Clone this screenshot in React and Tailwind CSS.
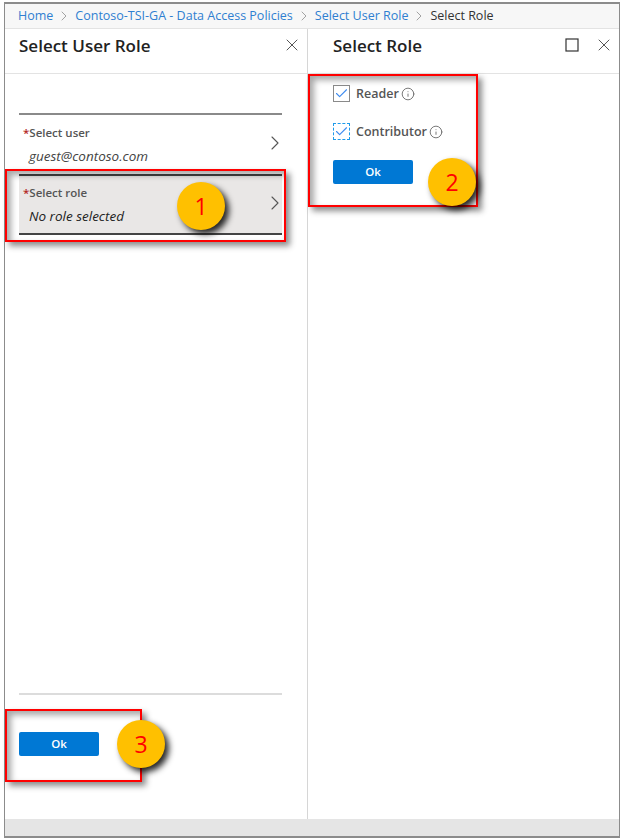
import React from 'react';
import { ChevronRight, X, Check, Info } from 'lucide-react';

const Crumb = ({ children, current }) => (
  <span className={current ? 'text-[#333333]' : 'text-[#2f7fd1]'}>{children}</span>
);

const Sep = () => <ChevronRight size={16} strokeWidth={1} className="mx-[3px] text-[#777777]" />;

const Row = ({ label, value, italicDark, active }) => (
  <div className={`flex items-center justify-between h-[59px] ${active ? 'bg-[#e9e7e6] border-b-2 border-[#444444]' : ''}`}>
    <div className="pl-[4px]">
      <div className="text-[11.5px] leading-[16px] font-semibold text-[#555555]">
        <span className="text-[#b3261e]">*</span>Select {label}
      </div>
      <div className={`pl-[6px] mt-[7px] text-[13.5px] leading-[16px] italic ${italicDark ? 'text-[#222222]' : 'text-[#444444]'}`}>{value}</div>
    </div>
    <ChevronRight size={24} strokeWidth={1.1} className="-mt-[3px] -mr-[5px] text-[#555555]" />
  </div>
);

const RoleCheck = ({ label, focused }) => (
  <div className="flex items-center h-[16px]">
    <div className={`w-[17px] h-[17px] flex items-center justify-center border ${focused ? 'border-dashed border-[#1f9bea]' : 'border-[#8a8a8a]'}`}>
      <Check size={15} strokeWidth={1.8} className="text-[#3f8cf0]" />
    </div>
    <span className="ml-[6px] pt-[3px] text-[12.5px] font-semibold text-[#555555]">{label}</span>
    <Info size={14} strokeWidth={1.5} className="ml-[2px] mt-[2px] text-[#666666]" />
  </div>
);

const OkButton = () => (
  <button className="block w-[80px] h-[24px] rounded-[2px] bg-[#0078d4] text-white text-[11.5px] font-semibold">Ok</button>
);

const Callout = ({ box, circle, n }) => (
  <>
    <div className={`absolute border-2 border-[#ff0000] shadow-[4px_4px_6px_rgba(0,0,0,0.45),inset_4px_4px_6px_rgba(0,0,0,0.35)] ${box}`} />
    <div className={`absolute w-[48px] h-[48px] rounded-full bg-[#ffc000] text-[#ff0000] text-[23px] flex items-center justify-center shadow-[4px_4px_6px_rgba(0,0,0,0.85)] ${circle}`}>{n}</div>
  </>
);

export default function App() {
  return (
    <div className="relative w-[622px] h-[839px] bg-white pt-[2px] pl-[4px] pr-[2px] pb-[1px] font-['Open_Sans',sans-serif]">
      <div className="h-full flex flex-col border border-[#8c8c8c] border-t-2 border-b-2">
        {/* breadcrumb */}
        <div className="h-[25px] shrink-0 flex items-center pl-[13px] bg-[#f7f7f7] text-[12.5px] border-b border-[#e3e3e3]">
          <Crumb>Home</Crumb>
          <Sep />
          <Crumb>Contoso-TSI-GA - Data Access Policies</Crumb>
          <Sep />
          <Crumb>Select User Role</Crumb>
          <Sep />
          <Crumb current>Select Role</Crumb>
        </div>

        <div className="flex-1 flex min-h-0">
          {/* Select User Role blade */}
          <div className="w-[303px] shrink-0 flex flex-col border-r border-[#d6d6d6]">
            <div className="h-[45px] shrink-0 flex items-start justify-between pl-[14px] pr-[5px] pt-[4px] border-b border-[#e3e3e3]">
              <h2 className="text-[17px] leading-[26px] font-semibold text-[#222222]">Select User Role</h2>
              <X size={20} strokeWidth={1} className="mt-[2px] text-[#333333]" />
            </div>
            <div className="flex-1 flex flex-col pl-[14px] pt-[39px] pr-[25px]">
              <div className="border-t-2 border-[#8a8a8a]">
                <Row label="user" value="guest@contoso.com" />
              </div>
              <div className="border-t-2 border-[#444444]">
                <Row label="role" value="No role selected" italicDark active />
              </div>
              <div className="mt-auto border-t-2 border-[#dcdcdc] pt-[37px] pb-[63px]">
                <OkButton />
              </div>
            </div>
          </div>

          {/* Select Role blade */}
          <div className="flex-1 flex flex-col">
            <div className="h-[45px] shrink-0 flex items-start justify-between pl-[25px] pr-[5px] pt-[4px] border-b border-[#e3e3e3]">
              <h2 className="text-[17px] leading-[26px] font-semibold text-[#222222]">Select Role</h2>
              <div className="flex items-center gap-[15px] mt-[2px] text-[#333333]">
                <svg width="14" height="14" viewBox="0 0 14 14" fill="none" stroke="currentColor" strokeWidth="1.2">
                  <rect x="1" y="1" width="12" height="12" />
                </svg>
                <X size={20} strokeWidth={1} />
              </div>
            </div>
            <div className="flex flex-col items-start pl-[25px] pt-[11px] gap-[22px]">
              <RoleCheck label="Reader" />
              <RoleCheck label="Contributor" focused />
              <div className="-mt-[1px]">
                <OkButton />
              </div>
            </div>
          </div>
        </div>

        <div className="h-[17px] shrink-0 bg-[#e5e5e5]" />
      </div>

      <Callout box="left-[5px] top-[169px] w-[281px] h-[73px]" circle="left-[177px] top-[182px]" n="1" />
      <Callout box="left-[308px] top-[74px] w-[170px] h-[133px]" circle="left-[428px] top-[158px]" n="2" />
      <Callout box="left-[5px] top-[709px] w-[137px] h-[73px]" circle="left-[117px] top-[720px]" n="3" />
    </div>
  );
}
